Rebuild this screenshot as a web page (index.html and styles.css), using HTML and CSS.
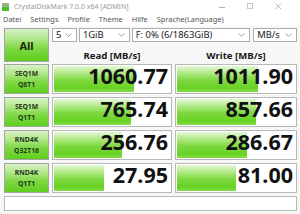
FILE: index.html
```html
<!DOCTYPE html>
<html>
<head>
<meta charset="utf-8">
<link rel="stylesheet" href="styles.css">
</head>
<body>
<div class="window">
  <div class="titlebar">
    <svg class="appicon" width="7" height="8" viewBox="0 0 7 8">
      <rect x="0" y="0" width="7" height="4" fill="#9ab08a"/>
      <rect x="0" y="4" width="7" height="4" fill="#4cbf2a"/>
    </svg>
    <span class="title">CrystalDiskMark 7.0.0 x64 [ADMIN]</span>
    <div class="winctrls">
      <svg width="7" height="7" viewBox="0 0 7 7"><line x1="0" y1="4.5" x2="6" y2="4.5" stroke="#b0b0b0" stroke-width="1"/></svg>
      <svg width="7" height="7" viewBox="0 0 7 7"><rect x="0.5" y="0.5" width="5" height="5" fill="none" stroke="#c8c8c8" stroke-width="1"/></svg>
      <svg width="7" height="7" viewBox="0 0 7 7"><path d="M0.5 0.5 L6 6 M6 0.5 L0.5 6" stroke="#b0b0b0" stroke-width="0.9"/></svg>
    </div>
  </div>
  <div class="menubar">
    <span>Datei</span><span>Settings</span><span>Profile</span><span>Theme</span><span>Hilfe</span><span>Sprache(Language)</span>
  </div>
  <div class="main">
    <div class="btn all">All</div>
    <div class="top">
      <div class="selects">
        <div class="select s1"><span>5</span><svg class="chev" width="7" height="4" viewBox="0 0 7 4"><path d="M0.5 0.5 L3.5 3.3 L6.5 0.5" fill="none" stroke="#9a9a9a" stroke-width="0.9"/></svg></div>
        <div class="select s2"><span>1GiB</span><svg class="chev" width="7" height="4" viewBox="0 0 7 4"><path d="M0.5 0.5 L3.5 3.3 L6.5 0.5" fill="none" stroke="#9a9a9a" stroke-width="0.9"/></svg></div>
        <div class="select s3"><span>F: 0% (6/1863GiB)</span><svg class="chev" width="7" height="4" viewBox="0 0 7 4"><path d="M0.5 0.5 L3.5 3.3 L6.5 0.5" fill="none" stroke="#9a9a9a" stroke-width="0.9"/></svg></div>
        <div class="select s4"><span>MB/s</span><svg class="chev" width="7" height="4" viewBox="0 0 7 4"><path d="M0.5 0.5 L3.5 3.3 L6.5 0.5" fill="none" stroke="#9a9a9a" stroke-width="0.9"/></svg></div>
      </div>
      <div class="heads">
        <div class="head">Read [MB/s]</div>
        <div class="head">Write [MB/s]</div>
      </div>
    </div>

    <div class="btn label"><span>SEQ1M</span><span>Q8T1</span></div>
    <div class="result"><div class="bar" style="width:80px"></div><span class="num">1060.77</span></div>
    <div class="result"><div class="bar" style="width:81px"></div><span class="num">1011.90</span></div>

    <div class="btn label"><span>SEQ1M</span><span>Q1T1</span></div>
    <div class="result"><div class="bar" style="width:77px"></div><span class="num">765.74</span></div>
    <div class="result"><div class="bar" style="width:79px"></div><span class="num">857.66</span></div>

    <div class="btn label"><span>RND4K</span><span>Q32T16</span></div>
    <div class="result"><div class="bar" style="width:68px"></div><span class="num">256.76</span></div>
    <div class="result"><div class="bar" style="width:70px"></div><span class="num">286.67</span></div>

    <div class="btn label"><span>RND4K</span><span>Q1T1</span></div>
    <div class="result"><div class="bar" style="width:50px"></div><span class="num">27.95</span></div>
    <div class="result"><div class="bar" style="width:59px"></div><span class="num">81.00</span></div>

    <div class="comment"></div>
  </div>
</div>
</body>
</html>
```
FILE: styles.css
```css
* { box-sizing: border-box; }
html, body { margin: 0; padding: 0; }
body {
  width: 300px;
  height: 214px;
  overflow: hidden;
  background: #f7f7f7;
  font-family: "Noto Sans", "Open Sans", sans-serif;
}
.window { width: 300px; height: 214px; }

.titlebar {
  height: 13px;
  background: #ffffff;
  display: flex;
  align-items: center;
  padding-left: 2px;
}
.appicon { display: block; margin-right: 5px; }
.title {
  font-size: 7px;
  color: #9a9a9a;
  line-height: 13px;
  flex: 1;
}
.winctrls {
  display: flex;
  align-items: center;
  gap: 21px;
  padding-right: 18px;
}
.winctrls svg { display: block; }

.menubar {
  height: 13px;
  background: #ffffff;
  display: flex;
  align-items: center;
  gap: 9px;
  padding-left: 3px;
  font-size: 7.4px;
  color: #555;
  line-height: 13px;
}

.main {
  display: grid;
  grid-template-columns: 45px 120px 122px;
  grid-template-rows: 33px 30px 30px 30px 30px 15px;
  column-gap: 3px;
  row-gap: 3px;
  padding: 2px 3px 0 4px;
}

.btn {
  border: 1px solid #a4a4a4;
  background: linear-gradient(to bottom, #d9f3c6 0%, #b2e78d 30%, #7fd844 60%, #5fce1e 100%);
  color: #1c2a14;
  font-weight: bold;
  display: flex;
  flex-direction: column;
  align-items: center;
  justify-content: center;
}
.all {
  font-size: 11px;
  height: 34px;
}
.label {
  font-size: 6.8px;
  line-height: 11px;
  color: #263a1a;
}

.top {
  grid-column: 2 / 4;
  display: flex;
  flex-direction: column;
}
.selects {
  display: flex;
  gap: 2px;
  height: 14px;
}
.select {
  border: 1px solid #adadad;
  background: #ffffff;
  display: flex;
  align-items: center;
  justify-content: space-between;
  padding: 0 4px 0 3px;
  font-size: 9.4px;
  color: #1a1a1a;
  line-height: 12px;
}
.chev { display: block; flex: none; }
.s1 { width: 25px; }
.s2 { width: 51px; }
.s3 { width: 119px; }
.s4 { width: 44px; margin-left: 1px; }

.heads {
  display: grid;
  grid-template-columns: 120px 122px;
  column-gap: 3px;
  flex: 1;
  align-items: end;
}
.head {
  text-align: center;
  font-weight: bold;
  font-size: 9.6px;
  line-height: 10px;
  color: #1a1a1a;
}

.result {
  border: 1px solid #b8b8b8;
  background: #ffffff;
  position: relative;
  display: flex;
  justify-content: flex-end;
  align-items: flex-start;
  padding: 0 3px 0 0;
}
.bar {
  position: absolute;
  left: 1px;
  top: 1px;
  bottom: 1px;
  background: linear-gradient(to bottom, #e6f8d9 0%, #b4ea8c 25%, #7cd83e 55%, #68d224 85%, #86dc4a 100%);
}
.num {
  position: relative;
  font-weight: bold;
  font-size: 21.5px;
  line-height: 22px;
  color: #111;
}

.comment {
  grid-column: 1 / 4;
  border: 1px solid #b8b8b8;
  background: #ffffff;
}
```
